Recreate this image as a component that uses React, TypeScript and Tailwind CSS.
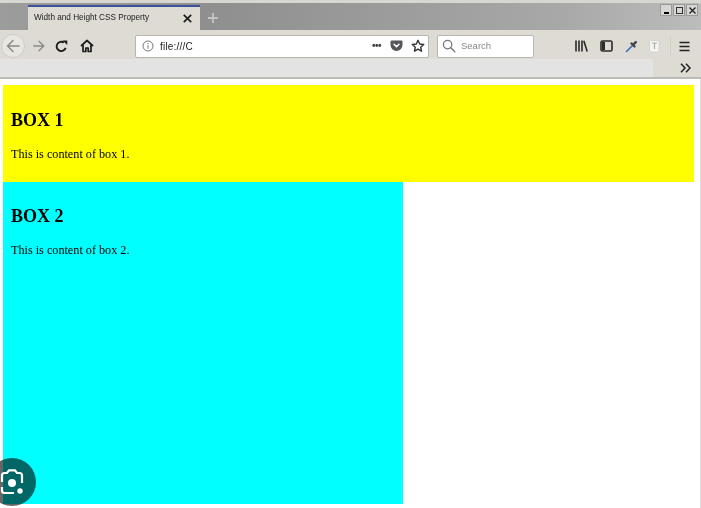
import React from "react";

const Back = () => (
  <svg width="16" height="16" viewBox="0 0 16 16" fill="none" stroke="#8a8a88" strokeWidth="1.5" strokeLinecap="round" strokeLinejoin="round">
    <path d="M14 8H2.5M8 2.5 2.5 8 8 13.5" />
  </svg>
);
const Forward = () => (
  <svg width="14" height="14" viewBox="0 0 16 16" fill="none" stroke="#8a8a88" strokeWidth="1.5" strokeLinecap="round" strokeLinejoin="round">
    <path d="M2 8h11.5M8 2.5 13.5 8 8 13.5" />
  </svg>
);
const Reload = () => (
  <svg width="13" height="13" viewBox="0 0 14 14" fill="none" stroke="#1c1c1c" strokeWidth="2">
    <path d="M11.5 8.5A5 5 0 1 1 9.6 2.8" />
    <path d="M8.2 0.5h5v5z" fill="#1c1c1c" stroke="none" />
  </svg>
);
const Home = () => (
  <svg width="14" height="14" viewBox="0 0 14 14" fill="none" stroke="#1c1c1c" strokeWidth="1.7" strokeLinejoin="round">
    <path d="M1 7 7 1.5 13 7" />
    <path d="M3 6v6.5h2.8V9h2.4v3.5H11V6" />
  </svg>
);
const Info = () => (
  <svg width="12" height="12" viewBox="0 0 12 12" fill="none" stroke="#777">
    <circle cx="6" cy="6" r="5" />
    <path d="M6 5.2v3.6M6 3v1.2" />
  </svg>
);
const Pocket = () => (
  <svg width="13" height="12" viewBox="0 0 13 12">
    <path d="M1.5.5h10a1 1 0 0 1 1 1V5a6 6 0 0 1-12 0V1.5a1 1 0 0 1 1-1z" fill="#55555a" />
    <path d="M4 4.2 6.5 6.6 9 4.2" stroke="#fff" strokeWidth="1.5" fill="none" strokeLinecap="round" />
  </svg>
);
const Star = () => (
  <svg width="14" height="14" viewBox="0 0 14 14" fill="none" stroke="#333" strokeWidth="1.4" strokeLinejoin="round">
    <path d="M7 1.3 8.7 5l4 .5-3 2.7.8 4L7 10.2l-3.5 2 .8-4-3-2.7 4-.5z" />
  </svg>
);
const Search = () => (
  <svg width="14" height="14" viewBox="0 0 14 14" fill="none" stroke="#777" strokeWidth="1.3" strokeLinecap="round">
    <circle cx="5.6" cy="5.6" r="4.2" />
    <path d="m8.8 8.8 4 4" />
  </svg>
);
const Library = () => (
  <svg width="13" height="12" viewBox="0 0 13 12" fill="none" stroke="#2b2b2b" strokeWidth="1.6">
    <path d="M1 .5v11M4 .5v11M7 .5v11M8.8 .8l3.4 10.6" />
  </svg>
);
const Sidebar = () => (
  <svg width="13" height="12" viewBox="0 0 13 12" fill="none" stroke="#2b2b2b" strokeWidth="1.6">
    <rect x="1" y="1" width="11" height="10" rx="1.5" />
    <rect x="2" y="2" width="3" height="8" fill="#2b2b2b" stroke="none" />
  </svg>
);
const Dropper = () => (
  <svg width="13" height="13" viewBox="0 0 13 13" fill="none" strokeLinecap="round">
    <path d="M1.5 11.5 7 6" stroke="#3a6fc0" strokeWidth="1.6" />
    <path d="m6.5 3.5 3 3M8.5 4.5l2.3-2.3" stroke="#444" strokeWidth="2.4" />
  </svg>
);
const Ext = () => (
  <svg width="13" height="14" viewBox="0 0 13 14">
    <rect x="1.5" y="1.5" width="9.5" height="11.5" rx="1" fill="#f5f5f3" stroke="#d3d3cf" />
    <path d="M4 4h5M6.5 4v6" stroke="#a9a9a5" strokeWidth="1.2" />
  </svg>
);
const Menu = () => (
  <svg width="11" height="11" viewBox="0 0 11 11" stroke="#222" strokeWidth="1.5">
    <path d="M.5 1.5h10M.5 5.5h10M.5 9.5h10" />
  </svg>
);
const Chevrons = () => (
  <svg width="11" height="10" viewBox="0 0 11 10" fill="none" stroke="#222" strokeWidth="1.5">
    <path d="M1 .8 5 5 1 9.2M6 .8 10 5 6 9.2" />
  </svg>
);
const Lens = () => (
  <svg width="48" height="48" viewBox="0 0 48 48" fill="none">
    <path d="M14 24v-6.5a2.5 2.5 0 0 1 2.5-2.5h2.5l2-2.6h6l2 2.6h2.5a2.5 2.5 0 0 1 2.5 2.5V25" stroke="#fff" strokeWidth="2.2" />
    <path d="M14 29v3.5a2.5 2.5 0 0 0 2.5 2.5H26" stroke="#fff" strokeWidth="2.2" />
    <circle cx="24" cy="25" r="4" fill="#fff" />
    <circle cx="32" cy="33" r="2.7" fill="#fff" />
  </svg>
);

const WinBtn = ({ children }: { children: React.ReactNode }) => (
  <div className="w-[12px] h-[12px] bg-[#d6d6d2] border border-[#9a9a9a] flex items-center justify-center">{children}</div>
);

export default function App() {
  return (
    <div className="relative w-[701px] h-[508px] overflow-hidden bg-white font-['Liberation_Sans',sans-serif]">
      <div className="blur-[0.6px]">
        <div className="h-[3px] bg-[#d8d6d0]" />
        <div className="h-[27px] flex items-end bg-[linear-gradient(90deg,#9c9c9c,#8f8f8f_30%,#a8a8a8_80%,#bcbcbc)]">
          <div className="w-[28px]" />
          <div className="w-[172px] h-[25px] bg-[#dedbd5] border-t-2 border-[#3c5296] flex items-center pl-[6px] pr-[8px]">
            <span className="text-[8.2px] text-[#222] flex-1 whitespace-nowrap">Width and Height CSS Property</span>
            <svg width="9" height="9" viewBox="0 0 9 9" stroke="#1f1f1f" strokeWidth="1.7"><path d="m.8.8 7.4 7.4M8.2.8.8 8.2" /></svg>
          </div>
          <svg className="ml-[7px] mb-[6px]" width="12" height="12" viewBox="0 0 12 12" stroke="#c4c4c4" strokeWidth="1.8"><path d="M6 1v10M1 6h10" /></svg>
          <div className="ml-auto mr-[3px] mb-[14px] flex gap-[1px]">
            <WinBtn><div className="w-[5px] h-[2px] bg-black mt-[5px]" /></WinBtn>
            <WinBtn><div className="w-[7px] h-[7px] border border-[#333]" /></WinBtn>
            <WinBtn><svg width="7" height="7" viewBox="0 0 7 7" stroke="#222" strokeWidth="1.3"><path d="m.5.5 6 6M6.5.5l-6 6" /></svg></WinBtn>
          </div>
        </div>
        <div className="h-[29px] bg-[#dedbd5] flex items-center pt-[3px]">
          <div className="ml-[1px] w-[24px] h-[24px] rounded-full bg-[#e8e6e1] border border-[#cfccc6] flex items-center justify-center"><Back /></div>
          <div className="ml-[7px]"><Forward /></div>
          <div className="ml-[9px]"><Reload /></div>
          <div className="ml-[12px]"><Home /></div>
          <div className="ml-[41px] w-[294px] h-[23px] bg-white border border-[#b8b6b0] rounded-[2px] flex items-center pl-[6px] pr-[3px]">
            <Info />
            <span className="ml-[6px] text-[10px] tracking-[0.2px] text-[#222] flex-1">file:///C</span>
            <span className="text-[#444] text-[10px] leading-none tracking-[-0.5px] font-bold mr-[9px]">•••</span>
            <Pocket />
            <div className="ml-[8px]"><Star /></div>
          </div>
          <div className="ml-[8px] w-[97px] h-[23px] bg-white border border-[#b8b6b0] rounded-[2px] flex items-center pl-[4px]">
            <Search />
            <span className="ml-[5px] text-[9.5px] text-[#888]">Search</span>
          </div>
          <div className="ml-[41px]"><Library /></div>
          <div className="ml-[12px]"><Sidebar /></div>
          <div className="ml-[12px]"><Dropper /></div>
          <div className="ml-[10px]"><Ext /></div>
          <div className="ml-[9px] w-px h-[20px] bg-[#d2cfc9]" />
          <div className="ml-[8px]"><Menu /></div>
        </div>
        <div className="h-[18px] bg-[#dedbd5] flex">
          <div className="w-[653px] bg-[#e3e3e3]" />
          <div className="flex-1 flex items-center justify-end pr-[10px]"><Chevrons /></div>
        </div>
        <div className="h-[2px] bg-[#bdbbb5]" />
      </div>

      <div className="h-[429px] border-r border-[#dcdcdc] pl-[3px] pt-[6px] font-['Liberation_Serif',serif] text-black">
        <div className="w-[691px] h-[97px] bg-[#ffff00] pl-[8px] pt-[25px]">
          <h2 className="text-[18px] leading-[21px] font-bold blur-[0.3px]">BOX 1</h2>
          <p className="mt-[16px] text-[12.2px] leading-[14px] blur-[0.3px]">This is content of box 1.</p>
        </div>
        <div className="w-[400px] h-[322px] bg-[#00ffff] pl-[8px] pt-[24px]">
          <h2 className="text-[18px] leading-[21px] font-bold blur-[0.3px]">BOX 2</h2>
          <p className="mt-[16px] text-[12.2px] leading-[14px] blur-[0.3px]">This is content of box 2.</p>
        </div>
      </div>

      <div className="absolute left-[-12px] top-[458px] w-[48px] h-[48px] rounded-full bg-black/60">
        <Lens />
      </div>
    </div>
  );
}
